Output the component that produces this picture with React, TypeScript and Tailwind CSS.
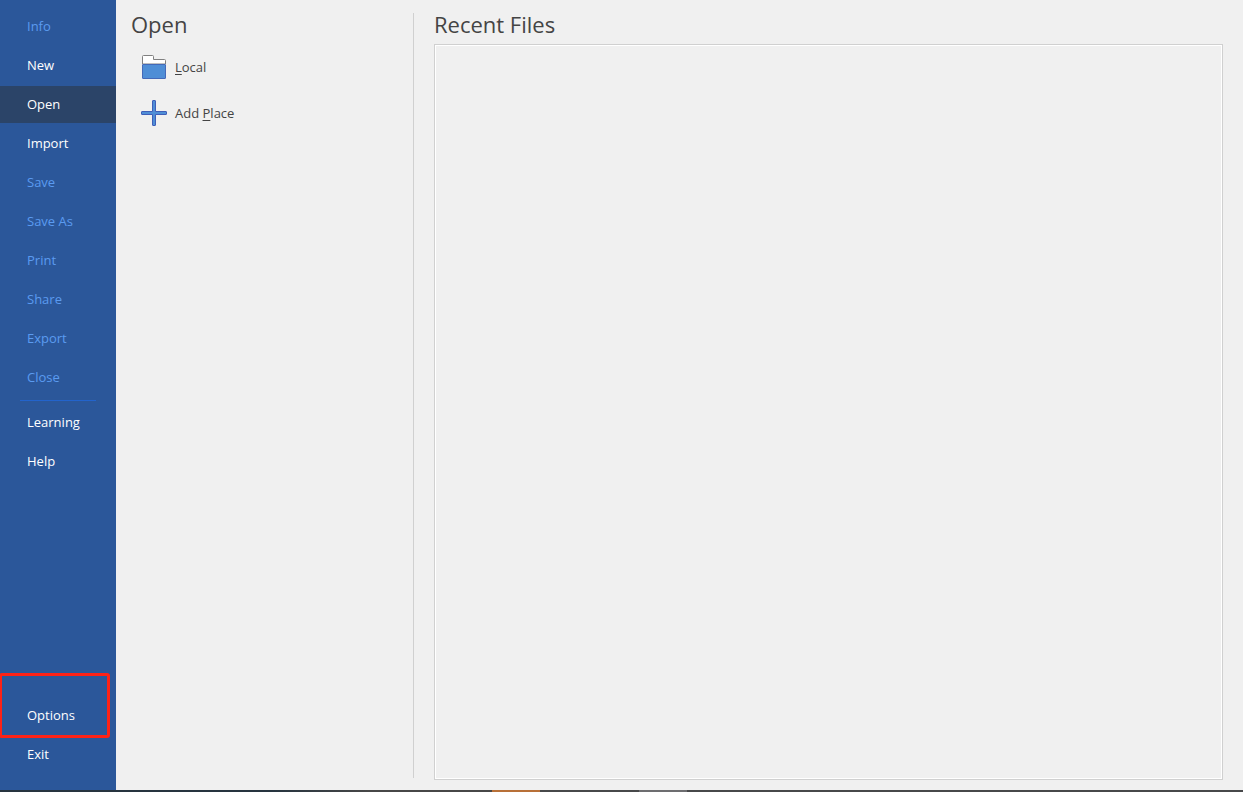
import clsx from "clsx";

interface MenuItem {
  label: string;
  disabled?: boolean;
  active?: boolean;
  marked?: boolean;
}

const fileItems: MenuItem[] = [
  { label: "Info", disabled: true },
  { label: "New" },
  { label: "Open", active: true },
  { label: "Import" },
  { label: "Save", disabled: true },
  { label: "Save As", disabled: true },
  { label: "Print", disabled: true },
  { label: "Share", disabled: true },
  { label: "Export", disabled: true },
  { label: "Close", disabled: true },
];
const helpItems: MenuItem[] = [{ label: "Learning" }, { label: "Help" }];
const appItems: MenuItem[] = [{ label: "Options", marked: true }, { label: "Exit" }];

function MenuList({ items }: { items: MenuItem[] }) {
  return (
    <ul className="flex flex-col gap-0.5">
      {items.map((item) => (
        <li key={item.label} className="relative">
          <button
            type="button"
            disabled={item.disabled}
            aria-current={item.active ? "page" : undefined}
            className={clsx(
              "flex h-[37px] w-full items-center pb-0.5 pl-[27px] text-left",
              item.active && "bg-[#2b4468]",
              item.disabled ? "text-[#5b9bf0]" : "text-white",
            )}
          >
            {item.label}
          </button>
          {item.marked && (
            <span className="pointer-events-none absolute -top-6 -left-px h-[65px] w-[111px] rounded-[3px] border-3 border-[#fe2216]" />
          )}
        </li>
      ))}
    </ul>
  );
}

function FolderIcon() {
  return (
    <svg width="26" height="26" viewBox="0 0 26 26" aria-hidden="true">
      <path d="M1.5 10V2.5a1 1 0 0 1 1-1h9a1 1 0 0 1 1 1v3h11a1 1 0 0 1 1 1V10z" fill="#fff" stroke="#808080" />
      <rect x="1.5" y="10.5" width="23" height="14" rx="0.5" fill="#4f8ed6" stroke="#4469b8" />
    </svg>
  );
}

function PlusIcon() {
  return (
    <svg width="26" height="26" viewBox="0 0 26 26" aria-hidden="true">
      <path
        d="M12 .5h2a.5.5 0 0 1 .5.5v10.500h10.500a.5.5 0 0 1 .5.5v2a.5.5 0 0 1-.5.5H14.500V25a.5.5 0 0 1-.5.5h-2a.5.5 0 0 1-.5-.5V14.500H1a.5.5 0 0 1-.5-.5v-2a.5.5 0 0 1 .5-.5H11.500V1a.5.5 0 0 1 .5-.5z"
        fill="#4f8ed6"
        stroke="#3f5fb8"
      />
    </svg>
  );
}

export default function App() {
  return (
    <div className="flex min-h-screen flex-col bg-[#f0f0f0] font-['Open_Sans','Noto_Sans',sans-serif] text-[13px] leading-5 text-[#444]">
      <div className="flex grow">
        <nav className="flex w-[116px] shrink-0 flex-col bg-[#2b579a] pt-2 pb-[17px]">
          <MenuList items={fileItems} />
          <hr className="mx-5 mt-1 mb-[3px] border-[#2364cc]" />
          <MenuList items={helpItems} />
          <div className="mt-auto">
            <MenuList items={appItems} />
          </div>
        </nav>

        <main className="flex grow pt-3 pr-5">
          <section className="mt-px mb-3 w-[298px] shrink-0 border-r border-[#d0d0d0] pl-[15px]">
            <h1 className="text-[22px] leading-[22px]">Open</h1>
            <div className="mt-[9px] flex flex-col items-start pl-2.5">
              <button type="button" className="flex h-[46px] items-center gap-2">
                <FolderIcon />
                <span>
                  <u className="underline-offset-2">L</u>ocal
                </span>
              </button>
              <button type="button" className="flex h-[46px] items-center gap-2">
                <PlusIcon />
                <span>
                  Add <u className="underline-offset-2">P</u>lace
                </span>
              </button>
            </div>
          </section>

          <section className="mb-2.5 flex grow flex-col pl-5">
            <h2 className="text-[22px] leading-6">Recent Files</h2>
            <div className="mt-2 grow border border-[#d0d0d0]">
              <div className="h-full border border-white" />
            </div>
          </section>
        </main>
      </div>

      {/* top edge of the desktop taskbar */}
      <footer className="flex h-0.5 bg-[#47484a]">
        <div className="w-[492px] bg-linear-to-r from-[#26343f] from-55% to-[#474747] to-75%" />
        <div className="w-12 bg-[#b87038]" />
        <div className="ml-[99px] w-12 bg-[#6d6d70]" />
      </footer>
    </div>
  );
}
